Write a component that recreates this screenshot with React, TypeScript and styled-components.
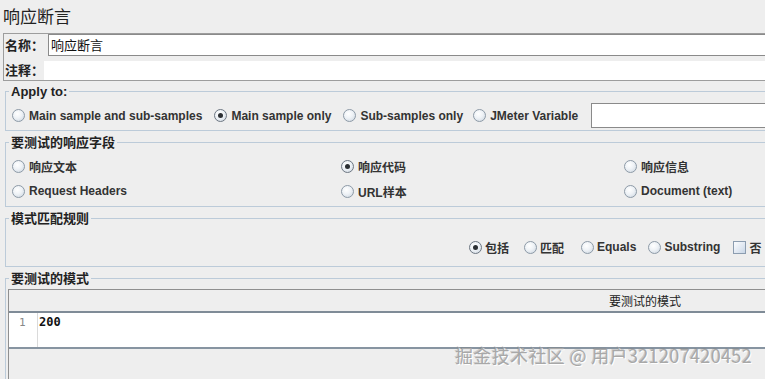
import React from 'react';
import styled, { createGlobalStyle } from 'styled-components';

const Global = createGlobalStyle`
  html, body { margin: 0; padding: 0; background: #eeeeee; overflow: hidden; }
  body { font-family: "Liberation Sans", "Noto Sans CJK SC", sans-serif; color: #333; }
  * { box-sizing: border-box; }
`;

const Page = styled.div`
  position: relative;
  width: 1290px;
  height: 379px;
  padding-top: 4px;
`;

const Title = styled.div`
  font-family: "Noto Sans CJK SC", sans-serif;
  font-size: 17px;
  line-height: 24px;
  height: 24px;
  padding-left: 3px;
  color: #222;
`;

const NameBox = styled.div`
  margin: 5px 0 0 3px;
  height: 48px;
  border: 1px solid #9d9d9d;
  display: flex;
  flex-direction: column;
`;

const NameRow = styled.div<{ $h: number }>`
  display: flex;
  height: ${p => p.$h}px;
`;

const FieldLabel = styled.div<{ $w: number; $pt: number }>`
  width: ${p => p.$w}px;
  padding: ${p => p.$pt}px 0 0 1px;
  font-family: "Noto Sans CJK SC", sans-serif;
  font-size: 13px;
  font-weight: bold;
  line-height: 18px;
  color: #222;
`;

const NameInput = styled.div`
  flex: 1;
  height: 22px;
  background: #fff;
  border: 1px solid #8a8a8a;
  border-right: none;
  padding-left: 2px;
  font-family: "Noto Sans CJK SC", sans-serif;
  font-size: 13px;
  line-height: 19px;
  color: #111;
`;

const CommentArea = styled.div`
  flex: 1;
  margin-top: 5px;
  background: #fff;
`;

const Group = styled.fieldset<{ $mt: number }>`
  margin: ${p => p.$mt}px 0 0 5px;
  padding: 0;
  min-width: 0;
  border: 1px solid #bccbd9;
`;

const Legend = styled.legend`
  margin-left: 3px;
  padding: 0 2px;
  font-family: "Liberation Sans", "Noto Sans CJK SC", sans-serif;
  font-size: 13px;
  font-weight: bold;
  line-height: 15px;
  color: #222;
`;

const OptionRow = styled.div<{ $pad: string; $h: number }>`
  display: flex;
  align-items: center;
  padding: ${p => p.$pad};
  & > * { height: ${p => p.$h}px; }
`;

const Option = styled.label<{ $gap?: number; $mr?: number }>`
  display: inline-flex;
  align-items: center;
  gap: ${p => p.$gap ?? 4}px;
  margin-right: ${p => p.$mr ?? 12}px;
  font-family: "Liberation Sans", "Noto Sans CJK SC", sans-serif;
  font-size: 12px;
  font-weight: bold;
  color: #333;
  white-space: nowrap;
`;

const Radio = styled.span<{ $on?: boolean }>`
  position: relative;
  width: 13px;
  height: 13px;
  border-radius: 50%;
  border: 1px solid ${p => (p.$on ? '#6d7782' : '#8d9aa7')};
  background: radial-gradient(circle at 40% 35%, #ffffff 0%, #eef2f6 45%, #c9d3de 100%);
  flex: none;
  &::after {
    content: '';
    display: ${p => (p.$on ? 'block' : 'none')};
    position: absolute;
    left: 3px;
    top: 3px;
    width: 5px;
    height: 5px;
    border-radius: 50%;
    background: #2b2f33;
  }
`;

const Check = styled.span`
  width: 13px;
  height: 13px;
  border: 1px solid #8c9db0;
  background: linear-gradient(135deg, #fbfcfe 0%, #dfe7f1 60%, #c8d6e6 100%);
  flex: none;
`;

const VarInput = styled.div`
  width: 220px;
  height: 25px !important;
  margin-left: 1px;
  background: #fff;
  border: 1px solid #8a8a8a;
`;

const FieldGrid = styled.div`
  display: grid;
  grid-template-columns: 329px 283px 1fr;
  grid-auto-rows: 20px;
  row-gap: 5px;
  padding: 6px 6px 5px;
  & > label { margin-right: 0; }
`;

const Table = styled.div`
  margin: 3px 7px 0 2px;
  height: 140px;
  border: 1px solid #8f8f8f;
  background: #eeeeee;
`;

const TableHead = styled.div`
  height: 23px;
  border-bottom: 2px solid #7f8b97;
  text-align: center;
  font-family: "Noto Sans CJK SC", sans-serif;
  font-size: 12px;
  line-height: 21px;
  color: #222;
`;

const Editor = styled.div`
  display: flex;
  height: 36px;
  background: #fff;
  border-bottom: 2px solid #8794a1;
`;

const Gutter = styled.div`
  width: 29px;
  padding: 2px 0 0 10px;
  border-right: 1px solid #dadada;
  font-family: "DejaVu Sans Mono", monospace;
  font-size: 11px;
  line-height: 15px;
  color: #888;
`;

const Code = styled.div`
  padding: 2px 0 0 1px;
  font-family: "DejaVu Sans Mono", monospace;
  font-size: 12px;
  font-weight: bold;
  line-height: 15px;
  color: #111;
`;

const Watermark = styled.div`
  position: absolute;
  left: 455px;
  top: 344px;
  font-family: "Noto Sans CJK SC", sans-serif;
  font-size: 18px;
  font-weight: 400;
  letter-spacing: 0.35px;
  line-height: 22px;
  color: #a8a8a8;
  text-shadow: 1px 1px 0 #ffffff, -1px -1px 0 rgba(120, 120, 120, 0.3);
  white-space: nowrap;
  pointer-events: none;
`;

export default function App() {
  return (
    <>
      <Global />
      <Page>
        <Title>响应断言</Title>
        <NameBox>
          <NameRow $h={22}>
            <FieldLabel $w={44} $pt={2}>名称：</FieldLabel>
            <NameInput>响应断言</NameInput>
          </NameRow>
          <NameRow $h={24}>
            <FieldLabel $w={40} $pt={5}>注释：</FieldLabel>
            <CommentArea />
          </NameRow>
        </NameBox>

        <Group $mt={3}>
          <Legend>Apply to:</Legend>
          <OptionRow $pad="4px 6px 2px" $h={25}>
            <Option $mr={12}><Radio />Main sample and sub-samples</Option>
            <Option $mr={12}><Radio $on />Main sample only</Option>
            <Option $mr={10}><Radio />Sub-samples only</Option>
            <Option $mr={12}><Radio />JMeter Variable</Option>
            <VarInput />
          </OptionRow>
        </Group>

        <Group $mt={4}>
          <Legend>要测试的响应字段</Legend>
          <FieldGrid>
            <Option><Radio />响应文本</Option>
            <Option><Radio $on />响应代码</Option>
            <Option><Radio />响应信息</Option>
            <Option><Radio />Request Headers</Option>
            <Option><Radio />URL样本</Option>
            <Option><Radio />Document (text)</Option>
          </FieldGrid>
        </Group>

        <Group $mt={4}>
          <Legend>模式匹配规则</Legend>
          <OptionRow $pad="11px 0 9px 463px" $h={20}>
            <Option $gap={3} $mr={15}><Radio $on />包括</Option>
            <Option $gap={3} $mr={17}><Radio />匹配</Option>
            <Option $gap={3} $mr={12}><Radio />Equals</Option>
            <Option $gap={3} $mr={13}><Radio />Substring</Option>
            <Option $gap={3} $mr={14}><Check />否</Option>
            <Option $gap={3}><Check />或</Option>
          </OptionRow>
        </Group>

        <Group $mt={4}>
          <Legend>要测试的模式</Legend>
          <Table>
            <TableHead>要测试的模式</TableHead>
            <Editor>
              <Gutter>1</Gutter>
              <Code>200</Code>
            </Editor>
          </Table>
        </Group>

        <Watermark>掘金技术社区 @ 用户321207420452</Watermark>
      </Page>
    </>
  );
}
